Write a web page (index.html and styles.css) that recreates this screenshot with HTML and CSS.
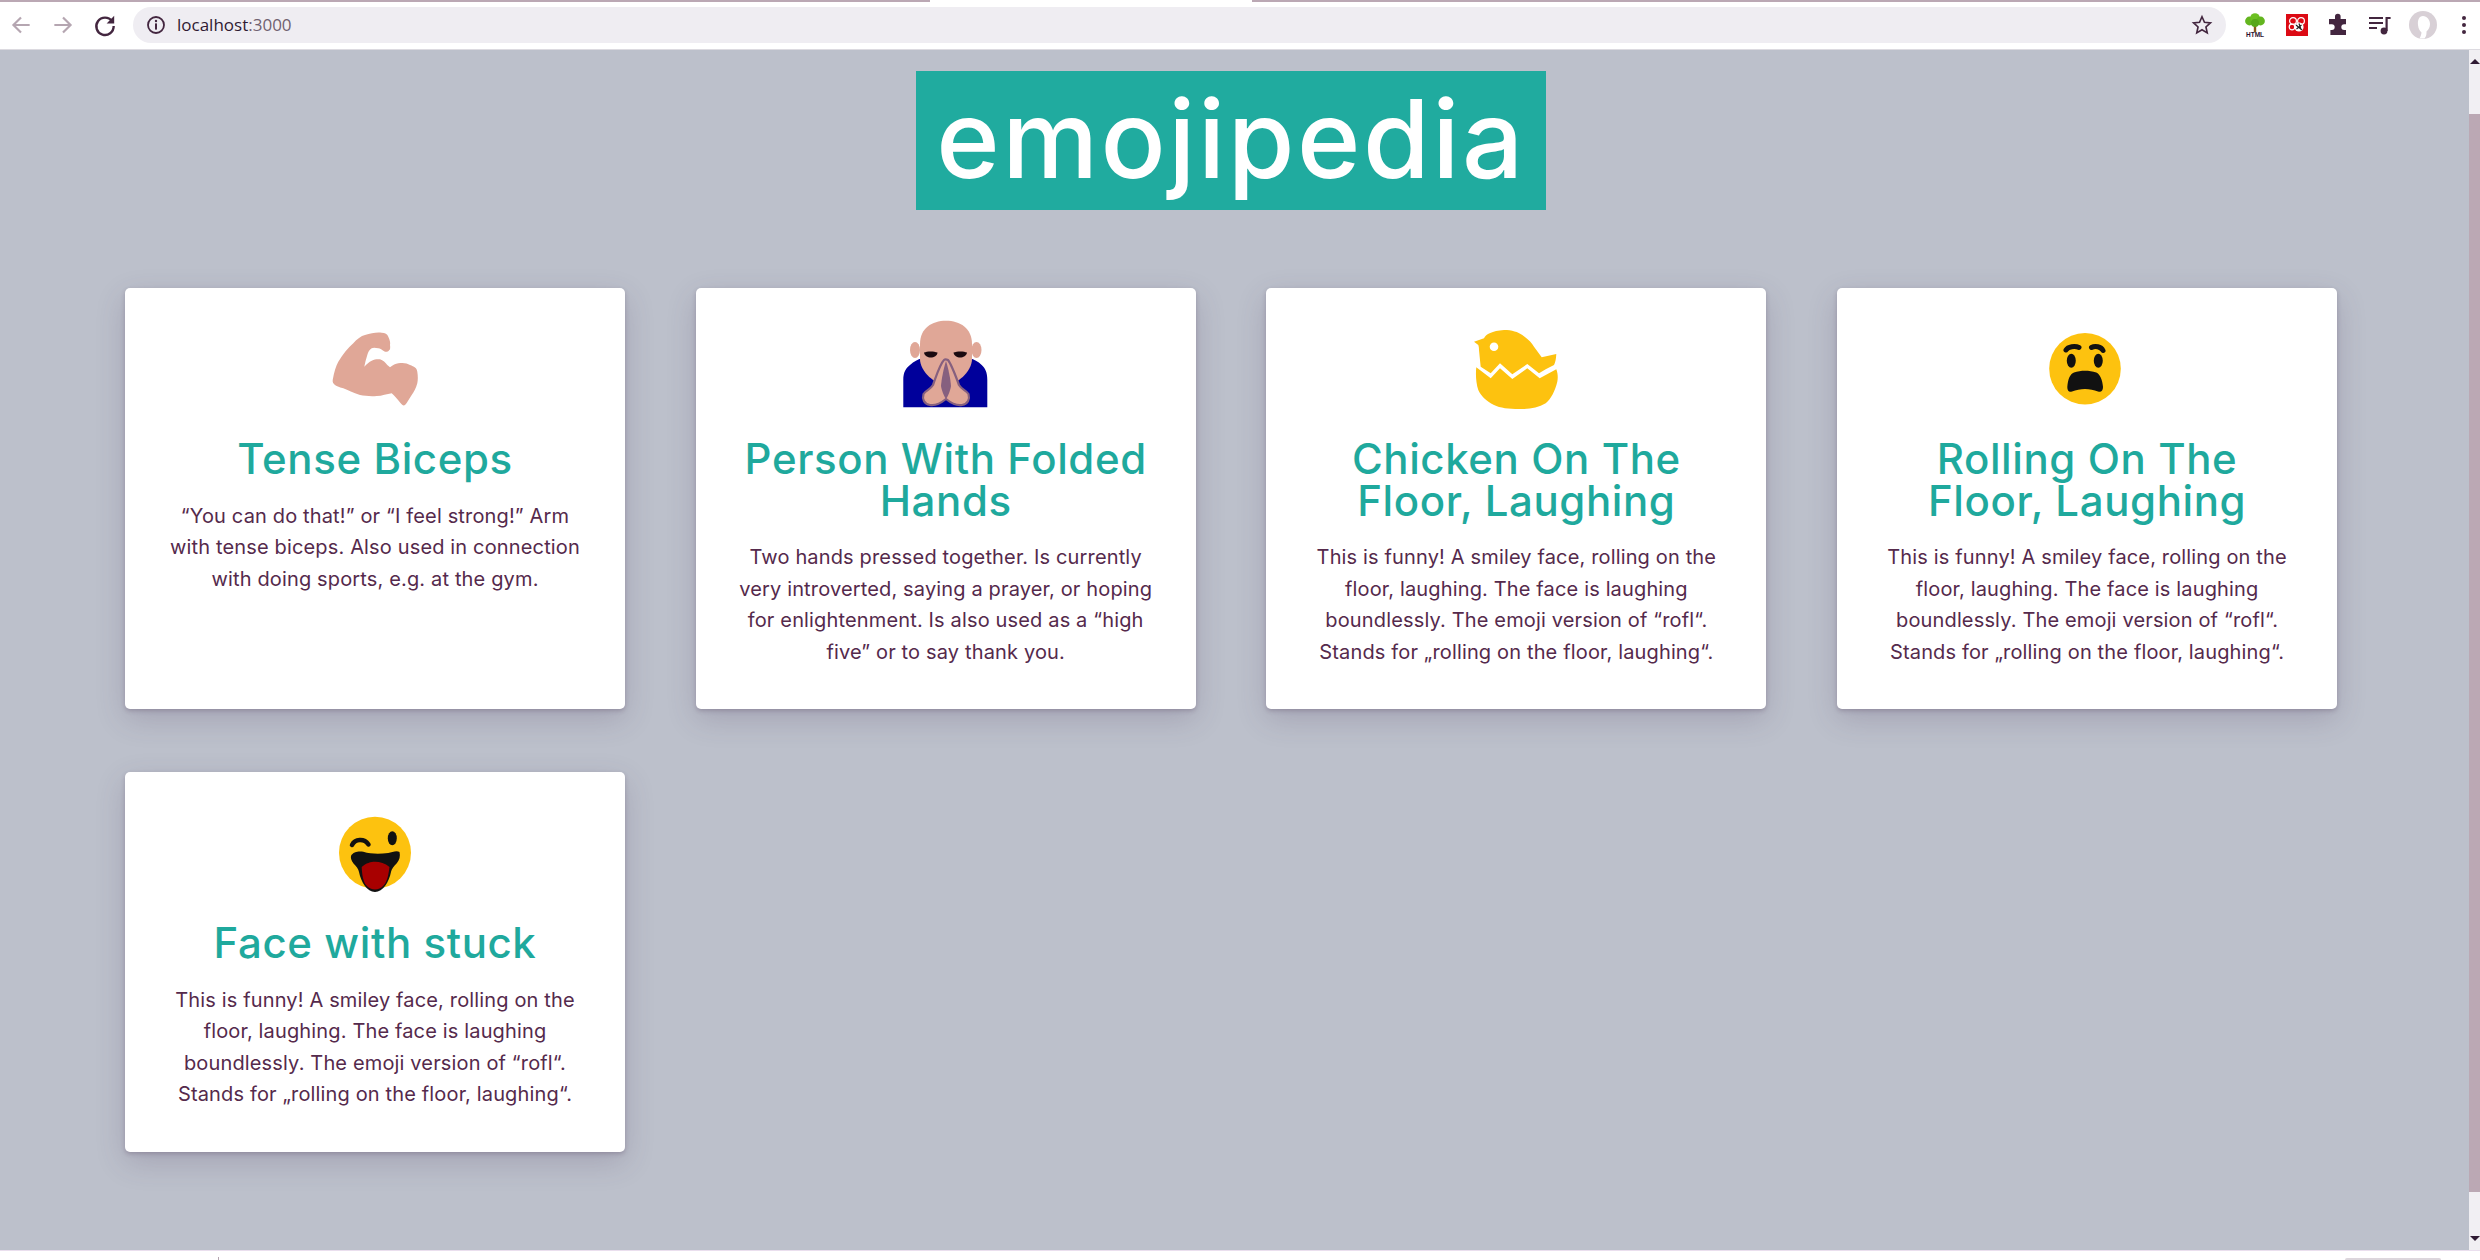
FILE: index.html
```html
<!DOCTYPE html>
<html lang="en">
<head>
    <meta charset="UTF-8">
    <meta name="viewport" content="width=device-width, initial-scale=1.0">
    <title>Emojipedia</title>
    <link rel="stylesheet" href="styles.css">
</head>
<body>
    <div class="tab-strip">
        <span class="tab-edge tab-edge-left"></span>
        <span class="tab-edge tab-edge-right"></span>
    </div>

    <div class="toolbar">
        <div class="nav-buttons">
            <svg class="tool-icon" viewBox="0 0 24 24"><path class="line-faded" d="M20 12H5M12 5l-7 7 7 7"/></svg>
            <svg class="tool-icon" viewBox="0 0 24 24"><path class="line-faded" d="M4 12h15M12 5l7 7-7 7"/></svg>
            <svg class="tool-icon" viewBox="0 0 24 24"><path class="line-dark" d="M18.5 8.5A8 8 0 1 0 20 13"/><path class="fill-dark" d="M20.5 3.5v7h-7z"/></svg>
        </div>
        <div class="omnibox">
            <svg class="info-icon" viewBox="0 0 20 20">
                <circle class="line-thin" cx="10" cy="10" r="8"/>
                <circle class="fill-dark" cx="10" cy="6" r="1.2"/>
                <rect class="fill-dark" x="9" y="8.4" width="2" height="6.2"/>
            </svg>
            <span class="url">localhost<span class="url-port">:3000</span></span>
            <svg class="star-icon" viewBox="0 0 24 24"><path class="line-thin" d="M12 3l2.7 6 6.5.7-4.9 4.4 1.4 6.5L12 17.2l-5.7 3.4 1.4-6.5-4.9-4.4 6.5-.7z"/></svg>
        </div>
        <div class="extensions">
            <svg class="ext-icon" viewBox="0 0 24 24">
                <rect x="10.8" y="9" width="2.4" height="10" fill="#8a5a1c"/>
                <circle cx="6.500" cy="8" r="4.400" fill="#63b51f"/>
                <circle cx="12" cy="5" r="4.800" fill="#6cc022"/>
                <circle cx="17.500" cy="8" r="4.400" fill="#63b51f"/>
                <circle cx="12" cy="10" r="4" fill="#57a61a"/>
                <text class="ext-label" x="12" y="23.800" text-anchor="middle">HTML</text>
            </svg>
            <svg class="ext-icon" viewBox="0 0 24 24">
                <rect x="1" y="1" width="22" height="22" fill="#dc0a14"/>
                <circle cx="8" cy="8" r="3.4" fill="none" stroke="#fff" stroke-width="1.2"/>
                <circle cx="16" cy="8" r="3.4" fill="none" stroke="#fff" stroke-width="1.2"/>
                <circle cx="7" cy="14" r="2.8" fill="none" stroke="#fff" stroke-width="1.2"/>
                <circle cx="14" cy="14" r="4.600" fill="#fff"/>
                <path d="M11 12l6 5M14 10.500l2 6M11.500 16l5-4" stroke="#222" stroke-width="1.2"/>
            </svg>
            <svg class="ext-icon" viewBox="0 0 24 24"><path class="fill-dark" d="M9 3.500a2.800 2.800 0 0 1 5.600 0V6H20v5.200h-1.800a2.900 2.900 0 0 0 0 5.800H20v5H4.400v-5h1.400a2.900 2.900 0 0 0 0-5.800H3V6h6z"/></svg>
            <svg class="ext-icon" viewBox="0 0 24 24">
                <path class="line-dark" d="M1 5h14M1 10h14M1 15h8"/>
                <circle class="fill-dark" cx="16" cy="18" r="3.4"/>
                <path class="line-dark" d="M18.600 18V5h4"/>
            </svg>
            <svg class="avatar" viewBox="0 0 28 28">
                <circle cx="14" cy="14" r="14" fill="#d8d0d6"/>
                <path d="M14 5c-4 0-5.500 4-5 9 .4 4 2 6 3.500 7.500-.2 2-.8 4-2 6h5c2-2 2-5 2-7 2-2 3.500-4 3.500-7.500C21 9 18 5 14 5z" fill="#fff"/>
            </svg>
            <div class="kebab"><span></span><span></span><span></span></div>
        </div>
    </div>

    <div class="viewport">
        <main class="page">
            <h1 class="site-title">emojipedia</h1>
            <dl class="cards">
                <div class="card">
                    <svg class="emoji" viewBox="0 0 100 100">
                        <path fill="#e0a797" d="M7.700 66C9 58 11 52 13.300 47.700C18 40 23 34 28.300 29.300C32 25 36 22 40 21C46 19 52 18 56.700 18.700C60 19 62.500 20 63.300 22.700C65 26 65.500 29 65 31C65.500 34 65 36 64.300 36C63 38 61 38 60 37.700C57 36 55 34.300 53.300 34.300C50 33.500 48 33.500 46.700 34.300C44.500 36 43 38 42.300 41C41 45 40 49 39.300 52.700C42 50 44 48 46.700 46.700C50 45 52.500 45 55 45.300C58 46 60.500 49 62.300 51L65 53.300C68 51 70.500 49.500 73.300 49.300C78 48.500 82 49 85 51C89 52.500 92 54 92.300 57.700C93 62 93 66 92.300 69.300C91 74 89 78 86.700 81C84 85 82 89 80 91C78.500 92 77 91 75.700 89.300C72 85 69 81 66.700 79.300C62 80 57 82 51.700 82C46 82.500 40 82 35 81C28 79 23 76 18.300 74.300C14 73 11 72 10 71C8 69.500 7.500 68 7.700 66Z"/>
                    </svg>
                    <dt class="card-title">Tense Biceps</dt>
                    <dd class="card-text">“You can do that!” or “I feel strong!” Arm<br>with tense biceps. Also used in connection<br>with doing sports, e.g. at the gym.</dd>
                </div>
                <div class="card">
                    <svg class="emoji" viewBox="0 0 100 100">
                        <path fill="#00009b" d="M7.300 93.300V66C7.300 58 10 54 14 51C18 47.500 22 45.500 25.700 44.300H74C78 45.500 82 47.500 85.700 51C89 54 91.300 58 91.300 66V93.300Z"/>
                        <ellipse cx="19" cy="36" rx="5" ry="8" fill="#e0a797"/>
                        <ellipse cx="80.500" cy="36" rx="5" ry="8" fill="#e0a797"/>
                        <path fill="#e0a797" d="M24 30C24 14 36 6.700 50 6.700C64 6.700 76 14 76 30V45C76 58 60 71 50 71C40 71 24 58 24 45Z"/>
                        <path d="M28 38.500C31 37 38 37 41.500 38.500C41 45 29 45.500 28 38.500Z" fill="#1a0a10"/>
                        <path d="M57.500 38.500C61 37 68 37 71 38.500C70 45 58.500 45.500 57.500 38.500Z" fill="#1a0a10"/>
                        <path fill="#e0a797" stroke="#86607f" stroke-width="2.200" d="M48 46C44 50 41 60 37 71C34 76 30 76 27.500 80C26 85 28 90 34 91C40 92 45 89 50 85C55 89 60 92 66 91C72 90 74 85 72.500 80C70 76 66 76 63 71C59 60 55 50 52 46C50 45 49 45 48 46Z"/>
                        <path fill="#86607f" d="M50 47C47.500 55 45.500 65 45 72C46 78 48.500 83 50 85C51.500 83 54 78 55 72C54.500 65 52.500 55 50 47Z"/>
                    </svg>
                    <dt class="card-title">Person With Folded<br>Hands</dt>
                    <dd class="card-text">Two hands pressed together. Is currently<br>very introverted, saying a prayer, or hoping<br>for enlightenment. Is also used as a “high<br>five” or to say thank you.</dd>
                </div>
                <div class="card">
                    <svg class="emoji" viewBox="0 0 100 100">
                        <path fill="#fdc20f" d="M8 27.700L18 24.300C20 20 26 17 38 16C46 16 52 18 56.300 21C62 25 66 29 68 32.700L75.700 43.300L90.300 40C90 45 89.500 48 88 51L79.700 55.300L73 59.300L61.300 50L46.300 60.300L34 49.300L24.700 59.300L14.700 52.700C14 46 13.500 41 13 36C13 34 12.800 32.500 12.300 31Z"/>
                        <circle cx="28" cy="32.700" r="4.300" fill="#fff"/>
                        <path fill="#fdc20f" d="M10.300 53.300L24.700 64.300L34 54.300L46.300 65L61.300 54.300L73.700 64.300L90.300 55.300C92 60 92 64 91.300 67.700C89 77 85 85 79.700 89.300C72 94 62 95.500 53 95C43 95 34 94 28 91C20 87 15 82 12.300 76C10 69 9.500 60 10.300 53.300Z"/>
                    </svg>
                    <dt class="card-title">Chicken On The<br>Floor, Laughing</dt>
                    <dd class="card-text">This is funny! A smiley face, rolling on the<br>floor, laughing. The face is laughing<br>boundlessly. The emoji version of “rofl“.<br>Stands for „rolling on the floor, laughing“.</dd>
                </div>
                <div class="card">
                    <svg class="emoji" viewBox="0 0 100 100">
                        <circle cx="48" cy="54.700" r="35.800" fill="#fdc20f"/>
                        <path d="M29 36C31 32.500 38 31.500 42 33.500M54.500 33.500C58 31.500 64 32.500 66 36.500" fill="none" stroke="#111" stroke-width="5" stroke-linecap="round"/>
                        <ellipse cx="34.300" cy="46.700" rx="4.500" ry="7" fill="#111"/>
                        <ellipse cx="61.300" cy="46.700" rx="4.500" ry="7" fill="#111"/>
                        <path fill="#111" d="M30.300 73C31 65 33 60 37 58.500C44 56 52 56 59.300 58.500C63 60 65.500 66 66 73C66 77 64 78.500 61 77.500C53 74 43 74 35 77.500C32 78.500 30.300 77 30.300 73Z"/>
                    </svg>
                    <dt class="card-title">Rolling On The<br>Floor, Laughing</dt>
                    <dd class="card-text">This is funny! A smiley face, rolling on the<br>floor, laughing. The face is laughing<br>boundlessly. The emoji version of “rofl“.<br>Stands for „rolling on the floor, laughing“.</dd>
                </div>
                <div class="card">
                    <svg class="emoji" viewBox="0 0 100 100">
                        <circle cx="50" cy="54.700" r="36" fill="#fdc20f"/>
                        <path d="M27 47C30 41 39 40 43.500 46.500" fill="none" stroke="#111" stroke-width="4.500" stroke-linecap="round"/>
                        <ellipse cx="67.300" cy="40.300" rx="4.500" ry="7" fill="#111"/>
                        <path fill="#111" d="M26 58C28 53.500 34 53 38.300 53.700C46 56 54 56 63.300 55C67 54 72 52 74.500 54C75.500 58 74.500 62 72 65C69 68 66.500 71 66 74C64 84 58 94 50 94C42 94 36 84 34 74C33.500 71 31 68 28.500 65.500C26.500 63 25.500 60 26 58Z"/>
                        <path fill="#a80000" d="M36.700 69C41 65 46 63.700 50 63.700C55 63.700 60 65 64.500 69C63.500 77 62 84 59 87C56 90.500 53 91.500 50 91.500C47 91.500 44 90.500 41 87C38.500 84 37 77 36.700 69Z"/>
                    </svg>
                    <dt class="card-title">Face with stuck</dt>
                    <dd class="card-text">This is funny! A smiley face, rolling on the<br>floor, laughing. The face is laughing<br>boundlessly. The emoji version of “rofl“.<br>Stands for „rolling on the floor, laughing“.</dd>
                </div>
            </dl>
        </main>
        <div class="scrollbar">
            <span class="arrow arrow-up"></span>
            <span class="thumb"></span>
            <span class="arrow arrow-down"></span>
        </div>
    </div>

    <div class="status-strip">
        <span class="status-tick"></span>
        <span class="status-box"></span>
    </div>
</body>
</html>
```

FILE: styles.css
```css
html, body {
    height: 100%;
}
body {
    font-family: Inter, "Open Sans", sans-serif;
    background-color: #fff;
    color: #4a1c40;
    margin: 0;
    padding: 0;
    height: 100vh;
    overflow: hidden;
    display: flex;
    flex-direction: column;
}

/* browser chrome */
.tab-strip {
    height: 2px;
    display: flex;
    justify-content: space-between;
    flex-shrink: 0;
}
.tab-edge {
    height: 2px;
    background-color: #bba8b4;
}
.tab-edge-left {
    width: 930px;
}
.tab-edge-right {
    width: 1228px;
}
.toolbar {
    height: 48px;
    box-sizing: border-box;
    padding-bottom: 2px;
    flex-shrink: 0;
    display: flex;
    align-items: center;
    background-color: #fff;
    border-bottom: 1px solid #dcdae0;
}
.nav-buttons {
    display: flex;
    align-items: center;
    gap: 16px;
    width: 133px;
    padding-left: 8px;
    box-sizing: border-box;
}
.tool-icon {
    width: 26px;
    height: 26px;
}
.line-faded {
    fill: none;
    stroke: #b5a6b1;
    stroke-width: 2;
}
.line-dark {
    fill: none;
    stroke: #43263f;
    stroke-width: 2.2;
}
.line-thin {
    fill: none;
    stroke: #43263f;
    stroke-width: 1.8;
}
.fill-dark {
    fill: #43263f;
}
.omnibox {
    width: 2093px;
    height: 36px;
    box-sizing: border-box;
    padding: 0 13px 0 13px;
    display: flex;
    align-items: center;
    background-color: #efedf2;
    border-radius: 18px;
}
.info-icon {
    width: 20px;
    height: 20px;
}
.url {
    margin-left: 11px;
    font-family: "Open Sans", sans-serif;
    font-size: 17px;
    color: #2f1a33;
}
.url-port {
    color: #6f6170;
}
.star-icon {
    width: 22px;
    height: 22px;
    margin-left: auto;
}
.extensions {
    flex: 1;
    display: flex;
    align-items: center;
    padding-left: 17px;
    gap: 17.5px;
}
.ext-icon {
    width: 24px;
    height: 24px;
    flex-shrink: 0;
}
.ext-label {
    font-family: "Liberation Sans", sans-serif;
    font-size: 6.5px;
    font-weight: bold;
    fill: #2a1030;
}
.avatar {
    width: 28px;
    height: 28px;
    flex-shrink: 0;
}
.kebab {
    display: flex;
    flex-direction: column;
    gap: 3px;
    margin-left: 7.5px;
}
.kebab span {
    width: 4px;
    height: 4px;
    border-radius: 50%;
    background-color: #43263f;
}

/* page */
.viewport {
    flex: 1;
    min-height: 0;
    display: flex;
    background-color: #bcc0cb;
}
.page {
    flex: 1;
    padding: 21px 0 0 125px;
}
.site-title {
    width: 630px;
    height: 139px;
    margin: 0 auto 78px 791px;
    background-color: #20ab9f;
    color: #fff;
    font-size: 108px;
    font-weight: 500;
    line-height: 135px;
    letter-spacing: 2.5px;
    text-align: center;
}
.cards {
    display: grid;
    grid-template-columns: repeat(4, 500px);
    column-gap: 70.7px;
    row-gap: 63px;
    margin: 0;
}
.card {
    background-color: #fff;
    border-radius: 5px;
    padding: 26px 0 41px;
    text-align: center;
    box-shadow: 0 2px 4px rgba(70, 50, 80, 0.25), 0 10px 30px rgba(70, 50, 90, 0.2);
}
.emoji {
    display: block;
    width: 100px;
    height: 100px;
    margin: 0 auto 24px;
}
.card-title {
    font-size: 42px;
    font-weight: 500;
    line-height: 41.6px;
    letter-spacing: 0.6px;
    color: #1fa99d;
    margin-bottom: 21px;
}
.card-text {
    margin: 0;
    font-size: 20px;
    line-height: 31.5px;
    letter-spacing: 0.15px;
    color: #552a4c;
    white-space: nowrap;
}

/* scrollbar */
.scrollbar {
    width: 11px;
    flex-shrink: 0;
    display: flex;
    flex-direction: column;
    align-items: center;
    background-color: #f1eff3;
    padding: 9px 0;
    box-sizing: border-box;
}
.thumb {
    width: 100%;
    flex: 1;
    margin: 50px 0 44px;
    background-color: #bba8b4;
}
.arrow {
    width: 0;
    height: 0;
    border-left: 5px solid transparent;
    border-right: 5px solid transparent;
}
.arrow-up {
    border-bottom: 5px solid #2f1a33;
}
.arrow-down {
    border-top: 5px solid #2f1a33;
}

/* strip below the page */
.status-strip {
    height: 10px;
    flex-shrink: 0;
    display: flex;
    align-items: flex-end;
    border-top: 1px solid #eadfee;
    box-sizing: border-box;
}
.status-tick {
    width: 1px;
    height: 3px;
    margin-left: 218px;
    background-color: #b5a6b1;
}
.status-box {
    width: 96px;
    height: 2px;
    margin-left: 2126px;
    border-radius: 3px 3px 0 0;
    background-color: #dcd6dc;
}
```
